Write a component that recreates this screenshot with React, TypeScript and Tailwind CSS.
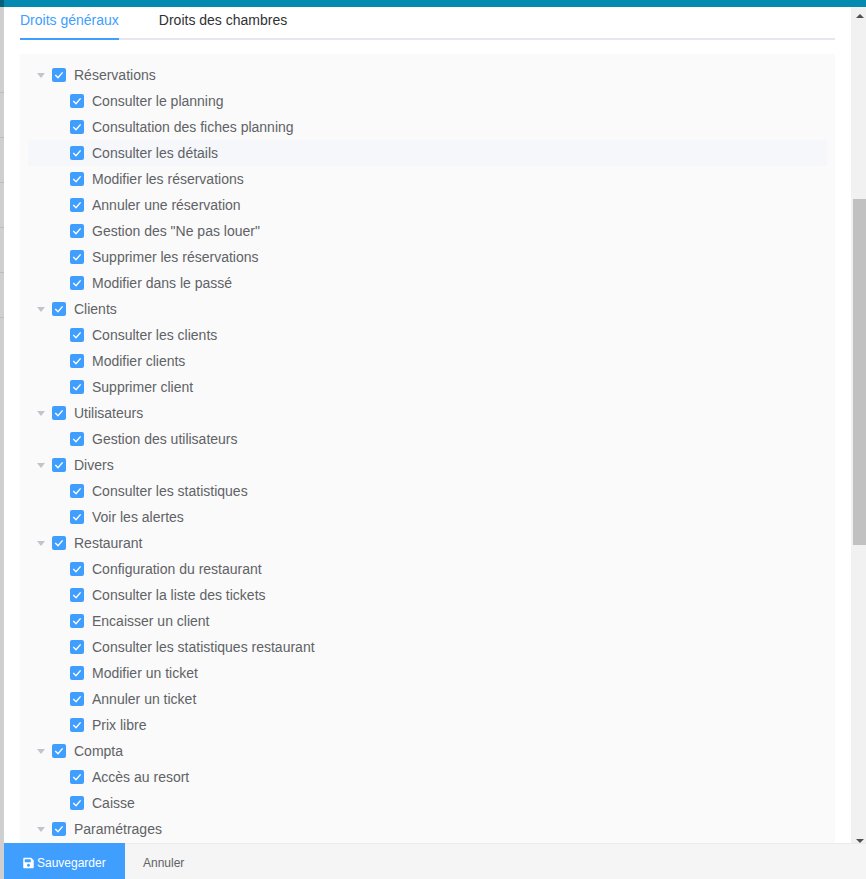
import { FaSave } from "react-icons/fa";

const groups: { label: string; items: string[] }[] = [
  { label: "Réservations", items: ["Consulter le planning", "Consultation des fiches planning", "Consulter les détails", "Modifier les réservations", "Annuler une réservation", 'Gestion des "Ne pas louer"', "Supprimer les réservations", "Modifier dans le passé"] },
  { label: "Clients", items: ["Consulter les clients", "Modifier clients", "Supprimer client"] },
  { label: "Utilisateurs", items: ["Gestion des utilisateurs"] },
  { label: "Divers", items: ["Consulter les statistiques", "Voir les alertes"] },
  { label: "Restaurant", items: ["Configuration du restaurant", "Consulter la liste des tickets", "Encaisser un client", "Consulter les statistiques restaurant", "Modifier un ticket", "Annuler un ticket", "Prix libre"] },
  { label: "Compta", items: ["Accès au resort", "Caisse"] },
  { label: "Paramétrages", items: [] },
];

function Check() {
  return (
    <span className="flex h-[14px] w-[14px] shrink-0 items-center justify-center rounded-[2px] bg-[#409eff]">
      <svg width="14" height="14" viewBox="0 0 14 14" fill="none">
        <path d="M3.3 7.1 L6 9.7 L10.6 4.4" stroke="#fff" strokeWidth="1.4" />
      </svg>
    </span>
  );
}

function Row({ label, child, hover }: { label: string; child?: boolean; hover?: boolean }) {
  return (
    <div className={`flex h-[26px] items-center ${child ? "pl-[42px]" : "pl-[9px]"} ${hover ? "bg-[#f5f7fa]" : ""}`}>
      {!child && (
        <svg width="8" height="5" viewBox="0 0 8 5" className="mr-[7px] shrink-0">
          <path d="M0 0 H8 L4 5 Z" fill="#c0c4cc" />
        </svg>
      )}
      <Check />
      <span className="ml-[8px] whitespace-nowrap text-[14px] leading-[26px] text-[#606266]">{label}</span>
    </div>
  );
}

export default function App() {
  return (
    <div className="flex h-[879px] w-[866px] overflow-hidden bg-white font-['Liberation_Sans',Arial,sans-serif]">
      <div className="flex w-[4px] shrink-0 flex-col bg-[#cfcfcf]">
        <div className="h-[7px] bg-[#04617a]" />
        <div className="mt-[85px] h-px bg-[#bdbdc4]" />
        <div className="mt-[44px] h-px bg-[#bdbdbd]" />
        <div className="mt-[44px] h-px bg-[#bdbdbd]" />
        <div className="mt-[44px] h-px bg-[#bdbdc4]" />
        <div className="mt-[44px] h-px bg-[#bdbdc4]" />
        <div className="mt-[44px] h-px bg-[#bdbdbd]" />
      </div>
      <div className="flex min-w-0 flex-1 flex-col">
        <div className="h-[7px] shrink-0 bg-[#0489b1]" />
        <div className="flex min-h-0 flex-1">
          <div className="min-w-0 flex-1 overflow-hidden px-4">
            <div className="flex h-[33px] border-b-2 border-[#e4e7ed]">
              <div className="-mb-[2px] h-[33px] border-b-2 border-[#409eff] text-[14px] leading-[26px] text-[#409eff]">Droits généraux</div>
              <div className="ml-10 text-[14px] leading-[26px] text-[#303133]">Droits des chambres</div>
            </div>
            <div className="mt-[14px] bg-[#fafafa] px-2 pb-4 pt-2">
              {groups.map((g) => (
                <div key={g.label}>
                  <Row label={g.label} />
                  {g.items.map((i) => (
                    <Row key={i} label={i} child hover={i === "Consulter les détails"} />
                  ))}
                </div>
              ))}
            </div>
          </div>
          <div className="flex w-[15px] shrink-0 flex-col items-end bg-[#f1f1f1]">
            <svg width="8" height="4" viewBox="0 0 8 4" className="mr-[2px] mt-[7px] shrink-0">
              <path d="M4 0 L8 4 H0 Z" fill="#505050" />
            </svg>
            <div className="mt-[181px] h-[346px] w-[13px] shrink-0 bg-[#c1c1c1]" />
            <svg width="8" height="4" viewBox="0 0 8 4" className="mr-[2px] mt-[294px] shrink-0">
              <path d="M0 0 H8 L4 4 Z" fill="#505050" />
            </svg>
          </div>
        </div>
        <div className="flex h-[36px] shrink-0 items-stretch border-t border-[#ebebeb] bg-[#f5f5f5]">
          <div className="-mt-px flex w-[121px] items-center gap-[3px] bg-[#409eff] pl-[19px] pt-[3px] text-[12px] font-medium text-white">
            <FaSave className="h-[12px] w-[11px]" />
            <span>Sauvegarder</span>
          </div>
          <div className="ml-[18px] flex items-center pt-[3px] text-[12px] text-[#606266]">Annuler</div>
        </div>
      </div>
    </div>
  );
}
